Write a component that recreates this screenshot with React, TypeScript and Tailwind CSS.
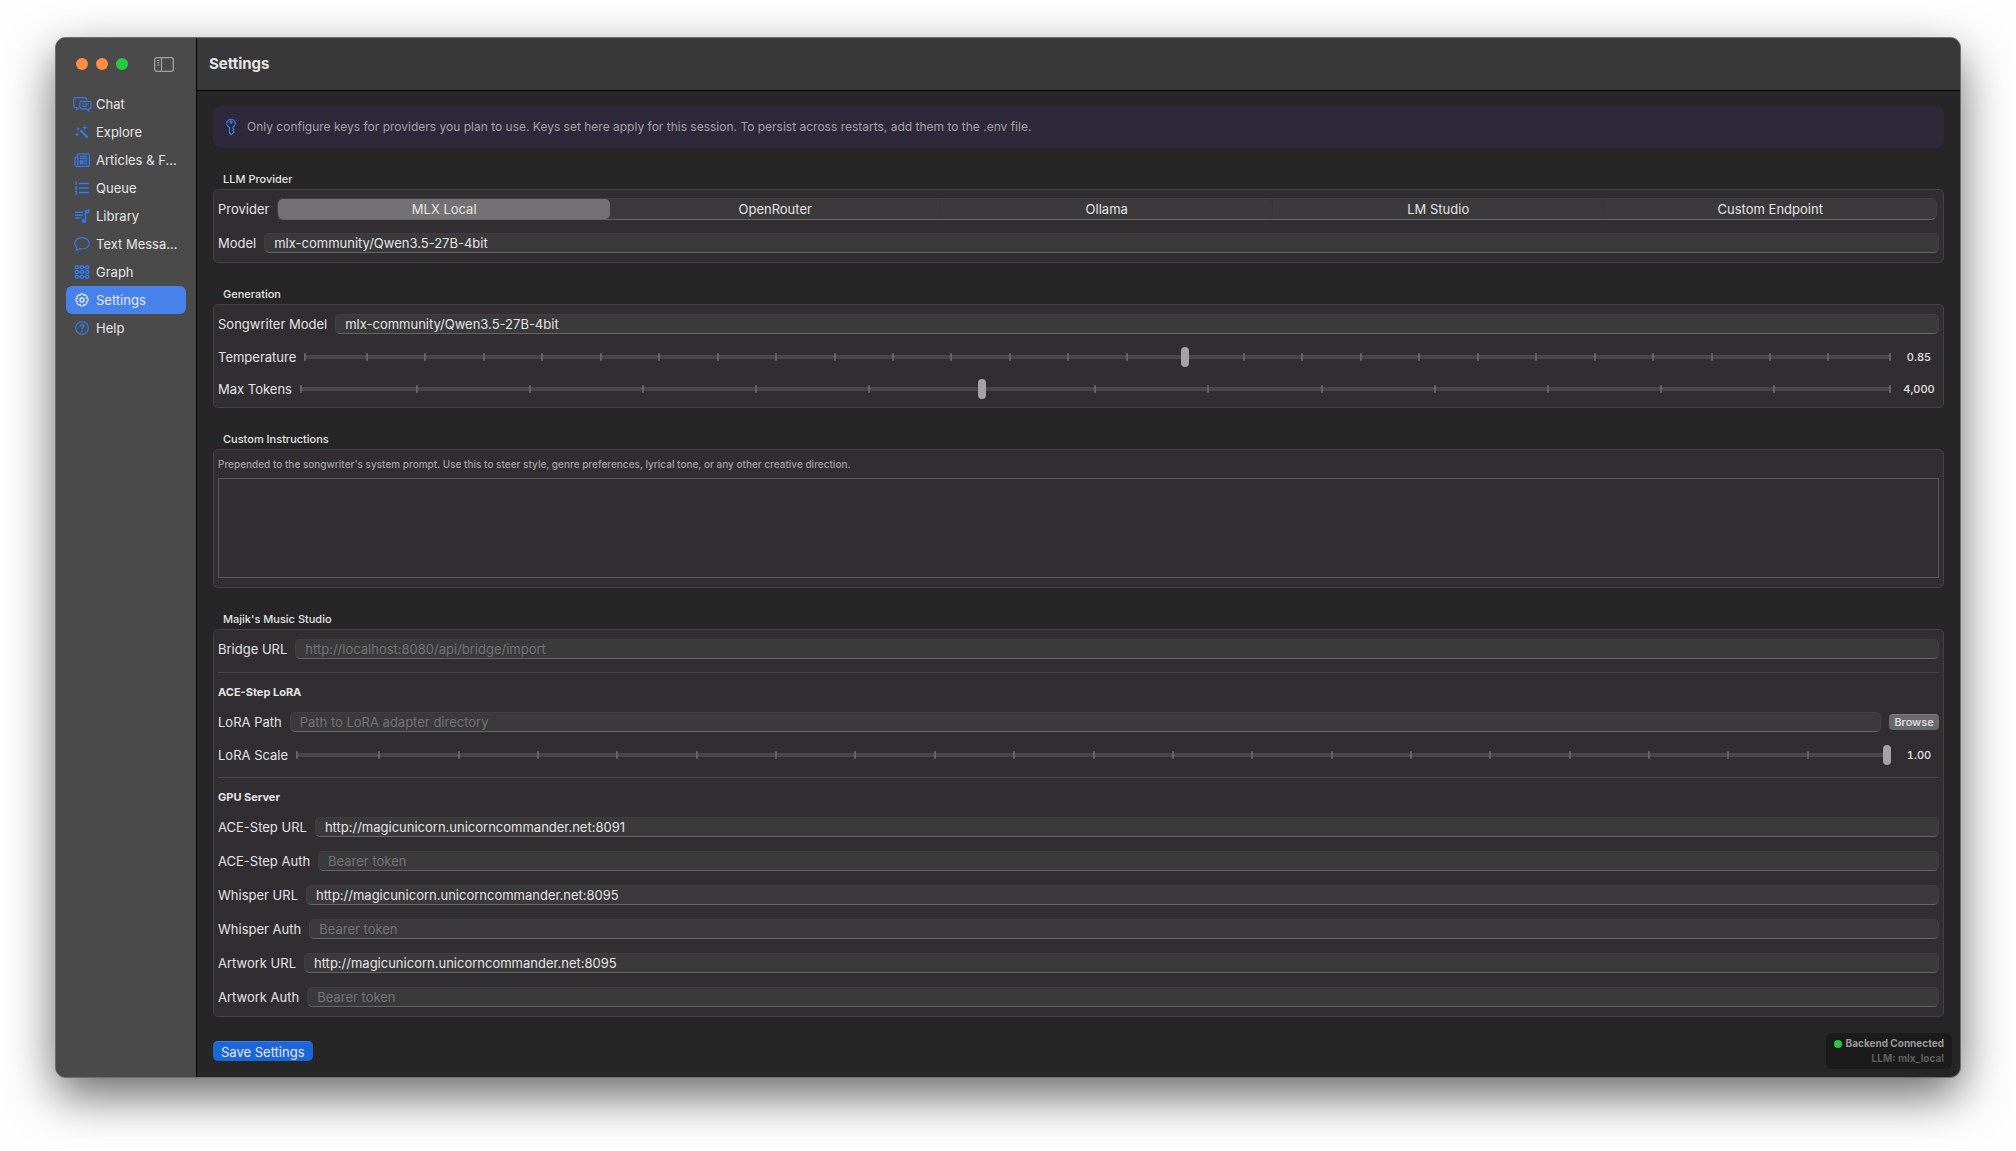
import { useState, type ReactNode } from "react";

const ICONS: Record<string, ReactNode> = {
  chat: (
    <>
      <path d="M5.5 11.8 3.6 13.8v-2.3H2.4A1.7 1.7 0 0 1 .7 9.8V3.4a1.7 1.7 0 0 1 1.7-1.7h9.4a1.7 1.7 0 0 1 1.7 1.7v.6" />
      <path d="M8.6 5.4h7.6a1.8 1.8 0 0 1 1.8 1.8v3.9a1.8 1.8 0 0 1-1.8 1.8h-.5v2l-2.4-2H8.6a1.8 1.8 0 0 1-1.8-1.8V7.2a1.8 1.8 0 0 1 1.8-1.8Z" />
      <path d="M9.6 8h5.6M9.6 10.4h4" />
    </>
  ),
  explore: (
    <>
      <path d="m7.6 6.2 7.2 7.6" strokeWidth="2.2" />
      <path d="M11.8 1.6v4M9.8 3.6h4M5 3.6v3M3.5 5.1h3M4 9.2v3M2.5 10.7h3" />
    </>
  ),
  articles: (
    <>
      <path
        d="M5.2 1.8h10a1.2 1.2 0 0 1 1.2 1.2v10a1.4 1.4 0 0 1-1.4 1.4H4a2 2 0 0 1-2-2V6.200a1 1 0 0 1 1-1h1.200"
        strokeWidth="1.3"
      />
      <path d="M4.600 13.600V1.800" strokeWidth="1.3" />
      <path d="M6.800 4.300h7.400M6.800 6.500h7.400M11.400 9h2.800M11.400 11.500h2.800" strokeWidth="1.3" />
      <path d="M7.200 8.900h2.600v2.700H7.200Z" fill="currentColor" />
    </>
  ),
  queue: (
    <path d="M6 3.500h10M6 8h10M6 12.500h10M2 2.300h1.200v2.400M2 7h1.500v2H2M2 11.300h1.500v2.600H2" strokeWidth="1.3" />
  ),
  library: (
    <>
      <path d="M2 4.300h8M2 7.200h8M2 10.100h6" strokeWidth="1.5" />
      <path d="M12.400 13V3l3.300-1v2.300l-3.300 1" strokeWidth="1.5" />
      <ellipse cx="10.900" cy="13.100" rx="1.700" ry="1.300" fill="currentColor" />
    </>
  ),
  messages: (
    <path d="M9 1.600c4 0 7.200 2.500 7.200 5.700S13 13 9 13c-.8 0-1.600-.1-2.300-.3-.9.9-2.100 1.500-3.700 1.500.8-.8 1-1.600.9-2.500C2.600 10.700 1.800 9 1.800 7.300c0-3.200 3.200-5.700 7.200-5.700Z" />
  ),
  graph: (
    <>
      {[3.8, 9, 14.2].map((cx) =>
        [3.3, 8, 12.7].map((cy) => <circle key={`${cx}-${cy}`} cx={cx} cy={cy} r="1.6" strokeWidth="1.4" />)
      )}
      <path d="M5.400 3.300h2M10.600 3.300h2M5.400 8h2M10.600 8h2M5.400 12.700h2M10.600 12.700h2" />
    </>
  ),
  settings: (
    <>
      <path
        d="M7.700 1.400h2.600l.5 1.500 1.400-.7 1.800 1.800-.7 1.400 1.700.6v2.500l-1.700.7.7 1.500-1.800 1.800-1.400-.8-.5 1.800H7.700l-.6-1.800-1.400.8-1.800-1.800.8-1.500L3 8.500V6l1.700-.6L3.900 4l1.800-1.800 1.400.7Z"
        transform="translate(0 .5)"
        strokeLinejoin="round"
      />
      <circle cx="9" cy="8" r="2" strokeWidth="1.4" />
    </>
  ),
  help: (
    <>
      <circle cx="9" cy="8" r="6.300" />
      <path d="M7.200 6.500c0-2.500 3.700-2.300 3.700-.2 0 1.400-1.800 1.300-1.800 2.800" strokeWidth="1.5" />
      <circle cx="9.100" cy="11.300" r=".5" fill="currentColor" />
    </>
  ),
};

const NAV = [
  { id: "chat", label: "Chat" },
  { id: "explore", label: "Explore" },
  { id: "articles", label: "Articles & F..." },
  { id: "queue", label: "Queue" },
  { id: "library", label: "Library" },
  { id: "messages", label: "Text Messa..." },
  { id: "graph", label: "Graph" },
  { id: "settings", label: "Settings" },
  { id: "help", label: "Help" },
];

const PROVIDERS = ["MLX Local", "OpenRouter", "Ollama", "LM Studio", "Custom Endpoint"];

function NavIcon({ id }: { id: string }) {
  return (
    <svg
      viewBox="0 0 19 16"
      className="h-4 w-[19px] shrink-0"
      fill="none"
      stroke="currentColor"
      strokeWidth="1.2"
      aria-hidden="true"
    >
      {ICONS[id]}
    </svg>
  );
}

function Sidebar() {
  return (
    <aside className="flex w-[141px] shrink-0 flex-col border-r border-black bg-[#4a4a4a]">
      <div className="flex h-[52px] items-center pl-5">
        <div className="flex gap-2">
          <span className="size-3 rounded-full bg-[#ff8d44]" />
          <span className="size-3 rounded-full bg-[#ff8d44]" />
          <span className="size-3 rounded-full bg-[#28c840]" />
        </div>
        <button type="button" aria-label="Toggle sidebar" className="ml-[26px] text-[#a2a2a2]">
          <svg viewBox="0 0 20 15" className="h-[15px] w-5" fill="none" stroke="currentColor" aria-hidden="true">
            <rect x=".7" y=".7" width="18.6" height="13.6" rx="2" strokeWidth="1.3" />
            <path d="M7.500 1v13" strokeWidth="1.2" />
            <path d="M3 3.500h2.500M3 5.800h2.500M3 8.100h2.500" />
          </svg>
        </button>
      </div>
      <nav className="px-[10px]">
        {NAV.map(({ id, label }) => (
          <a
            key={id}
            href={`#${id}`}
            aria-current={id === "settings" ? "page" : undefined}
            className={`flex h-7 items-center gap-1 rounded-md pl-[7px] whitespace-nowrap ${
              id === "settings" ? "bg-[#4682e9] text-[#e3e3e3]" : "text-[#3479ee]"
            }`}
          >
            <NavIcon id={id} />
            <span className="text-[#e6e6e6]">{label}</span>
          </a>
        ))}
      </nav>
    </aside>
  );
}

function Section({ title, children }: { title: string; children: ReactNode }) {
  return (
    <section className="mt-[23px]">
      <h2 className="mb-0.5 pl-[10px] text-[11px] leading-4 font-medium">{title}</h2>
      <div className="flex flex-col gap-[14px] rounded-[5px] border border-[#434345] bg-[#302e31] px-1 py-[9px]">
        {children}
      </div>
    </section>
  );
}

interface FieldProps {
  id: string;
  label: string;
  value?: string;
  placeholder?: string;
  children?: ReactNode;
}

function Field({ id, label, value, placeholder, children }: FieldProps) {
  return (
    <div className="flex h-5 items-center gap-2">
      <label htmlFor={id} className="shrink-0">
        {label}
      </label>
      <input
        id={id}
        type="text"
        defaultValue={value}
        placeholder={placeholder}
        className="h-5 min-w-0 flex-1 rounded-[5px] border border-[#404041] border-b-[#656566] bg-[#3a3a3b] px-[9px] outline-none placeholder:text-[#747475]"
      />
      {children}
    </div>
  );
}

interface SliderProps {
  id: string;
  label: string;
  min: number;
  max: number;
  step: number;
  initial: number;
  format: (value: number) => string;
}

function Slider({ id, label, min, max, step, initial, format }: SliderProps) {
  const [value, setValue] = useState(initial);
  const ticks = Math.round((max - min) / step) + 1;

  return (
    <div className="flex h-[18px] items-center gap-2">
      <label htmlFor={id} className="shrink-0">
        {label}
      </label>
      <div className="grid min-w-0 flex-1 items-center">
        <div className="col-start-1 row-start-1 h-1 rounded-full bg-[#48484a]" />
        <div className="col-start-1 row-start-1 flex justify-between px-[3px]">
          {Array.from({ length: ticks }, (_, i) => (
            <span
              key={i}
              className="h-2 w-0.5 rounded-full bg-[#646466] first:-translate-x-[3px] last:translate-x-[3px]"
            />
          ))}
        </div>
        <input
          id={id}
          type="range"
          min={min}
          max={max}
          step={step}
          value={value}
          onChange={(e) => setValue(Number(e.target.value))}
          className="z-10 col-start-1 row-start-1 h-5 w-full appearance-none bg-transparent outline-none [&::-webkit-slider-thumb]:h-5 [&::-webkit-slider-thumb]:w-2 [&::-webkit-slider-thumb]:appearance-none [&::-webkit-slider-thumb]:rounded-full [&::-webkit-slider-thumb]:bg-[#a3a3a4]"
        />
      </div>
      <output htmlFor={id} className="w-10 shrink-0 text-center text-[11px] font-medium tabular-nums">
        {format(value)}
      </output>
    </div>
  );
}

function ProviderPicker() {
  const [provider, setProvider] = useState(PROVIDERS[0]);

  return (
    <div className="flex h-5 items-center gap-2">
      <span id="provider-label" className="shrink-0">
        Provider
      </span>
      <div
        role="group"
        aria-labelledby="provider-label"
        className="mr-0.5 grid h-[22px] min-w-0 flex-1 grid-cols-5 rounded-md border border-[#404041] border-b-[#656566] bg-[#3a3a3b]"
      >
        {PROVIDERS.map((name) => (
          <button
            key={name}
            type="button"
            aria-pressed={name === provider}
            onClick={() => setProvider(name)}
            className={`rounded-[5px] ${
              name === provider ? "bg-[#727273]" : "border-r border-[#363637] last:border-r-0"
            }`}
          >
            {name}
          </button>
        ))}
      </div>
    </div>
  );
}

function SubHeading({ children }: { children: ReactNode }) {
  return <h3 className="-my-0.5 text-[11px] leading-4 font-bold">{children}</h3>;
}

function Divider() {
  return <hr className="-my-px border-[#48484a]" />;
}

export default function App() {
  return (
    <div className="flex min-h-screen bg-[#fefefe] px-14 pt-[38px] pb-[74px] font-['Inter','Liberation_Sans',sans-serif] text-[13px] leading-4 text-[#e4e4e4]">
      <div className="flex min-w-0 flex-1 overflow-hidden rounded-[10px] bg-[#262626] shadow-[0_0_0_1px_#6e6e6e,0_18px_48px_rgba(0,0,0,0.6)]">
        <Sidebar />
        <div className="flex min-w-0 flex-1 flex-col">
          <header className="flex h-[53px] shrink-0 items-center border-b border-black bg-[#383838] pl-3">
            <h1 className="text-[15px] font-bold">Settings</h1>
          </header>
          <main className="relative flex-1 px-4 pt-[15px] pb-4">
            <div className="flex h-[42px] items-center gap-[10px] rounded-lg bg-[#2d293b] pl-3 text-xs text-[#a3a1a5]">
              <svg
                viewBox="0 0 12 18"
                className="h-[18px] w-3 text-[#3b82f0]"
                fill="none"
                stroke="currentColor"
                strokeWidth="1.1"
                strokeLinejoin="round"
                aria-hidden="true"
              >
                <path d="M4.500 9.300a4.200 4.200 0 1 1 3.300-.1v.9l1.300 1.200-1.200 1.300 1.200 1.300-2.800 2.800-1.800-1.700Z" />
                <circle cx="6" cy="4" r="1.1" />
              </svg>
              <p>
                Only configure keys for providers you plan to use. Keys set here apply for this session. To persist
                across restarts, add them to the .env file.
              </p>
            </div>

            <Section title="LLM Provider">
              <ProviderPicker />
              <Field id="model" label="Model" value="mlx-community/Qwen3.5-27B-4bit" />
            </Section>

            <Section title="Generation">
              <Field id="songwriter-model" label="Songwriter Model" value="mlx-community/Qwen3.5-27B-4bit" />
              <Slider
                id="temperature"
                label="Temperature"
                min={0.1}
                max={1.45}
                step={0.05}
                initial={0.85}
                format={(v) => v.toFixed(2)}
              />
              <Slider
                id="max-tokens"
                label="Max Tokens"
                min={1000}
                max={8000}
                step={500}
                initial={4000}
                format={(v) => v.toLocaleString("en-US")}
              />
            </Section>

            <Section title="Custom Instructions">
              <div className="flex flex-col gap-2">
                <label htmlFor="instructions" className="text-[10px] leading-[11px] font-medium text-[#a3a1a5]">
                  Prepended to the songwriter's system prompt. Use this to steer style, genre preferences, lyrical
                  tone, or any other creative direction.
                </label>
                <textarea
                  id="instructions"
                  className="block h-[100px] w-full resize-none border border-[#5a5a5c] bg-[#302e31] p-1 outline-none"
                />
              </div>
            </Section>

            <Section title="Majik's Music Studio">
              <Field id="bridge-url" label="Bridge URL" placeholder="http://localhost:8080/api/bridge/import" />
              <Divider />
              <SubHeading>ACE-Step LoRA</SubHeading>
              <Field id="lora-path" label="LoRA Path" placeholder="Path to LoRA adapter directory">
                <button
                  type="button"
                  className="h-4 w-[50px] shrink-0 rounded border-t border-[#7c7c7e] bg-[#69696b] text-[11px] leading-[15px] font-medium"
                >
                  Browse
                </button>
              </Field>
              <Slider
                id="lora-scale"
                label="LoRA Scale"
                min={0}
                max={1}
                step={0.05}
                initial={1}
                format={(v) => v.toFixed(2)}
              />
              <Divider />
              <SubHeading>GPU Server</SubHeading>
              <Field id="ace-url" label="ACE-Step URL" value="http://magicunicorn.unicorncommander.net:8091" />
              <Field id="ace-auth" label="ACE-Step Auth" placeholder="Bearer token" />
              <Field id="whisper-url" label="Whisper URL" value="http://magicunicorn.unicorncommander.net:8095" />
              <Field id="whisper-auth" label="Whisper Auth" placeholder="Bearer token" />
              <Field id="artwork-url" label="Artwork URL" value="http://magicunicorn.unicorncommander.net:8095" />
              <Field id="artwork-auth" label="Artwork Auth" placeholder="Bearer token" />
            </Section>

            <button
              type="button"
              className="mt-6 block h-5 rounded-[5px] border-t border-[#3a80ea] bg-[#1b66d9] px-2 leading-[18px]"
            >
              Save Settings
            </button>

            <div className="absolute right-2 bottom-2 rounded-md bg-[#1b1b1b] px-2 py-[3px] text-right text-[10px] leading-[15px] font-bold">
              <p className="flex items-center gap-1 text-[#9a9a9a]">
                <span className="size-2 rounded-full bg-[#28c840]" />
                Backend Connected
              </p>
              <p className="text-[#5f5f5f]">LLM: mlx_local</p>
            </div>
          </main>
        </div>
      </div>
    </div>
  );
}
